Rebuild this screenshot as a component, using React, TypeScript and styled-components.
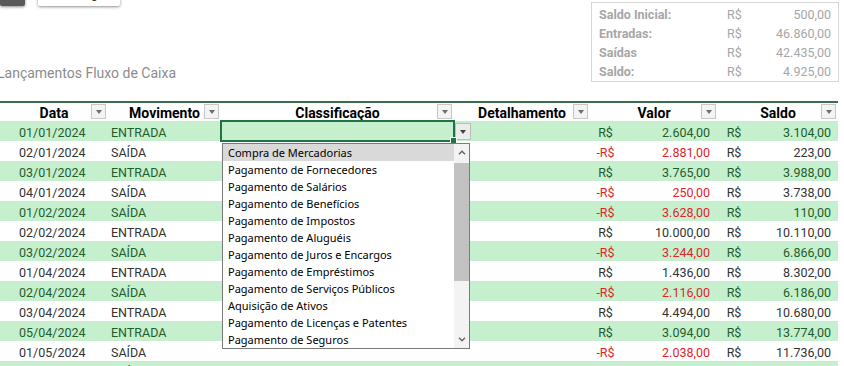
import styled, { createGlobalStyle } from 'styled-components';

const GlobalStyle = createGlobalStyle`
  html, body {
    margin: 0;
    padding: 0;
    overflow: hidden;
    background: #fff;
  }
  body {
    font-family: Roboto, 'Liberation Sans', Arial, sans-serif;
  }
`;

const COLS = '108px 113px 233px 136px 128px 120px';

const Sheet = styled.div`
  width: 844px;
  height: 366px;
  overflow: hidden;
`;

const TopArea = styled.div`
  display: flex;
  justify-content: space-between;
  align-items: flex-start;
  height: 101px;
`;

const LeftTop = styled.div`
  display: flex;
  flex-direction: column;
`;

const Toolbar = styled.div`
  display: flex;
  gap: 13px;
  margin-top: -18px;
`;

const ShapeButton = styled.div<{ $dark?: boolean; $width: number }>`
  width: ${(p) => p.$width}px;
  height: 24px;
  box-sizing: border-box;
  padding-left: ${(p) => (p.$dark ? 0 : 10)}px;
  background: ${(p) => (p.$dark ? '#595959' : '#fff')};
  box-shadow: 0 1px 3px rgba(0, 0, 0, 0.45);
  border-radius: 2px;
  display: flex;
  align-items: center;
  justify-content: center;
  font-size: 12px;
  color: #333;
  white-space: nowrap;
`;

const Title = styled.div`
  margin: 59px 0 0 -3px;
  font-size: 14px;
  line-height: 16px;
  color: #8c8c8c;
`;

const Summary = styled.div`
  margin: 2px 5px 0 0;
  width: 248px;
  box-sizing: border-box;
  border: 1px solid #d6d6d6;
  padding: 2px 7px 0;
  display: grid;
  grid-template-columns: 128px 14px 1fr;
  grid-auto-rows: 19px;
  align-items: center;
  font-size: 12.5px;
  color: #a6a6a6;
`;

const SummaryLabel = styled.span`
  font-weight: 700;
`;

const SummaryValue = styled.span`
  text-align: right;
`;

const Table = styled.div`
  width: 838px;
  border-top: 2px solid #3b6e48;
`;

const HeaderRow = styled.div`
  display: grid;
  grid-template-columns: ${COLS};
  height: 18px;
`;

const HeaderCell = styled.div`
  position: relative;
  text-align: center;
  font-size: 14px;
  font-weight: 700;
  line-height: 20px;
  color: #000;
`;

const FilterButton = styled.div`
  position: absolute;
  right: 2px;
  top: 1px;
  width: 15px;
  height: 15px;
  box-sizing: border-box;
  border: 1px solid #c8c8c8;
  background: #f3f3f3;
  display: flex;
  align-items: center;
  justify-content: center;
`;

const Triangle = styled.span<{ $color: string }>`
  width: 0;
  height: 0;
  border-left: 3.5px solid transparent;
  border-right: 3.5px solid transparent;
  border-top: 4px solid ${(p) => p.$color};
`;

const DataRow = styled.div<{ $band: boolean }>`
  display: grid;
  grid-template-columns: ${COLS};
  height: 20px;
  line-height: 23px;
  font-size: 12.5px;
  background: ${(p) => (p.$band ? '#c6efce' : '#fff')};
  color: ${(p) => (p.$band ? '#1f5d2c' : '#333')};
`;

const TextCell = styled.div<{ $pad: number }>`
  padding-left: ${(p) => p.$pad}px;
  white-space: nowrap;
  height: 20px;
`;

const MoneyCell = styled.div<{ $sym: number; $right: number; $neg?: boolean }>`
  display: flex;
  height: 20px;
  padding-right: ${(p) => p.$right}px;
  color: ${(p) => (p.$neg ? '#e0242a' : 'inherit')};

  > span:first-child {
    width: ${(p) => p.$sym}px;
    text-align: center;
  }
  > span:last-child {
    flex: 1;
    text-align: right;
  }
`;

const SelectedCell = styled.div`
  position: relative;
  z-index: 2;
  height: 20px;
  outline: 2px solid #217346;
  outline-offset: -1px;
`;

const FillHandle = styled.span`
  position: absolute;
  right: -3px;
  bottom: -3px;
  width: 5px;
  height: 5px;
  background: #217346;
  border: 1px solid #fff;
`;

const DropButton = styled.div`
  position: absolute;
  left: calc(100% + 1px);
  top: 2px;
  width: 16px;
  height: 17px;
  box-sizing: border-box;
  border: 1px solid #bdbdbd;
  background: #ececec;
  display: flex;
  align-items: center;
  justify-content: center;
`;

const ListBox = styled.div`
  position: absolute;
  top: 22px;
  left: 1px;
  width: 248px;
  height: 206px;
  box-sizing: border-box;
  border: 1px solid #7a7a7a;
  background: #fff;
  display: flex;
  z-index: 3;
  line-height: normal;
`;

const ListItems = styled.div`
  flex: 1;
  display: flex;
  flex-direction: column;
`;

const ListItem = styled.div<{ $active?: boolean }>`
  height: 17px;
  line-height: 17px;
  padding-left: 5px;
  font-family: 'Noto Sans', 'Open Sans', sans-serif;
  font-size: 11px;
  color: #000;
  white-space: nowrap;
  background: ${(p) => (p.$active ? '#d9d9d9' : 'transparent')};
`;

const ScrollBar = styled.div`
  width: 15px;
  background: #f3f3f3;
  display: flex;
  flex-direction: column;
`;

const ScrollArrow = styled.div`
  height: 17px;
  display: flex;
  align-items: center;
  justify-content: center;
`;

const Thumb = styled.div`
  margin-top: 2px;
  height: 118px;
  background: #c2c2c2;
`;

const Spacer = styled.div`
  flex: 1;
`;

type Row = [string, string, number, number];

const rows: Row[] = [
  ['01/01/2024', 'ENTRADA', 2604, 3104],
  ['02/01/2024', 'SAÍDA', -2881, 223],
  ['03/01/2024', 'ENTRADA', 3765, 3988],
  ['04/01/2024', 'SAÍDA', -250, 3738],
  ['01/02/2024', 'SAÍDA', -3628, 110],
  ['02/02/2024', 'ENTRADA', 10000, 10110],
  ['03/02/2024', 'SAÍDA', -3244, 6866],
  ['01/04/2024', 'ENTRADA', 1436, 8302],
  ['02/04/2024', 'SAÍDA', -2116, 6186],
  ['03/04/2024', 'ENTRADA', 4494, 10680],
  ['05/04/2024', 'ENTRADA', 3094, 13774],
  ['01/05/2024', 'SAÍDA', -2038, 11736],
  ['02/05/2024', 'SAÍDA', -1500, 10236],
];

const options = [
  'Compra de Mercadorias',
  'Pagamento de Fornecedores',
  'Pagamento de Salários',
  'Pagamento de Benefícios',
  'Pagamento de Impostos',
  'Pagamento de Aluguéis',
  'Pagamento de Juros e Encargos',
  'Pagamento de Empréstimos',
  'Pagamento de Serviços Públicos',
  'Aquisição de Ativos',
  'Pagamento de Licenças e Patentes',
  'Pagamento de Seguros',
];

const headers = ['Data', 'Movimento', 'Classificação', 'Detalhamento', 'Valor', 'Saldo'];

function money(n: number) {
  const int = Math.abs(Math.round(n))
    .toString()
    .replace(/\B(?=(\d{3})+(?!\d))/g, '.');
  return `${int},00`;
}

function Chevron({ up }: { up?: boolean }) {
  return (
    <svg width='8' height='5' viewBox='0 0 8 5'>
      <polyline
        points={up ? '1,4.2 4,1.2 7,4.2' : '1,0.8 4,3.8 7,0.8'}
        fill='none'
        stroke='#606060'
        strokeWidth='1.3'
      />
    </svg>
  );
}

function Dropdown() {
  return (
    <>
      <DropButton>
        <Triangle $color='#444' />
      </DropButton>
      <FillHandle />
      <ListBox>
        <ListItems>
          {options.map((o, i) => (
            <ListItem key={o} $active={i === 0}>
              {o}
            </ListItem>
          ))}
        </ListItems>
        <ScrollBar>
          <ScrollArrow>
            <Chevron up />
          </ScrollArrow>
          <Thumb />
          <Spacer />
          <ScrollArrow>
            <Chevron />
          </ScrollArrow>
        </ScrollBar>
      </ListBox>
    </>
  );
}

export default function App() {
  return (
    <Sheet>
      <GlobalStyle />
      <TopArea>
        <LeftTop>
          <Toolbar>
            <ShapeButton $dark $width={25} />
            <ShapeButton $width={82}>Novo Registro</ShapeButton>
          </Toolbar>
          <Title>Lançamentos Fluxo de Caixa</Title>
        </LeftTop>
        <Summary>
          <SummaryLabel>Saldo Inicial:</SummaryLabel>
          <span>R$</span>
          <SummaryValue>500,00</SummaryValue>
          <SummaryLabel>Entradas:</SummaryLabel>
          <span>R$</span>
          <SummaryValue>46.860,00</SummaryValue>
          <SummaryLabel>Saídas</SummaryLabel>
          <span>R$</span>
          <SummaryValue>42.435,00</SummaryValue>
          <SummaryLabel>Saldo:</SummaryLabel>
          <span>R$</span>
          <SummaryValue>4.925,00</SummaryValue>
        </Summary>
      </TopArea>

      <Table>
        <HeaderRow>
          {headers.map((h) => (
            <HeaderCell key={h}>
              {h}
              <FilterButton>
                <Triangle $color='#6d6d6d' />
              </FilterButton>
            </HeaderCell>
          ))}
        </HeaderRow>
        {rows.map(([date, mov, valor, saldo], i) => (
          <DataRow key={date} $band={i % 2 === 0}>
            <TextCell $pad={19}>{date}</TextCell>
            <TextCell $pad={3}>{mov}</TextCell>
            {i === 0 ? (
              <SelectedCell>
                <Dropdown />
              </SelectedCell>
            ) : (
              <div />
            )}
            <div />
            <MoneyCell $sym={31} $right={8} $neg={valor < 0}>
              <span>{valor < 0 ? '-R$' : 'R$'}</span>
              <span>{money(valor)}</span>
            </MoneyCell>
            <MoneyCell $sym={32} $right={7}>
              <span>R$</span>
              <span>{money(saldo)}</span>
            </MoneyCell>
          </DataRow>
        ))}
      </Table>
    </Sheet>
  );
}
